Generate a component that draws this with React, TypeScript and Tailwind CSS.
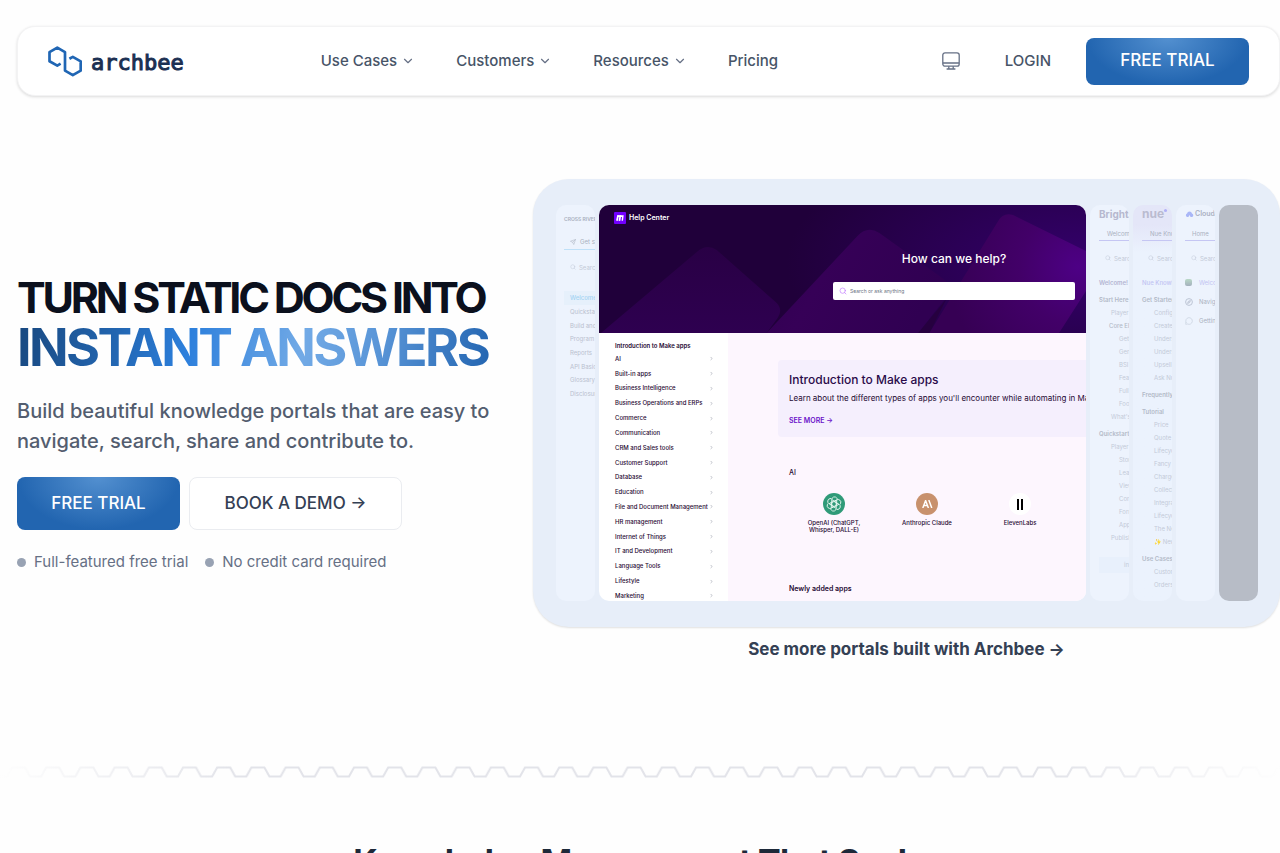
import { ChevronDown, ChevronRight, MessageCircle, Search, Send } from 'lucide-react';

const navItems = [
  { label: 'Use Cases', menu: true },
  { label: 'Customers', menu: true },
  { label: 'Resources', menu: true },
  { label: 'Pricing', menu: false },
];

const makeTopics = [
  'AI',
  'Built-in apps',
  'Business Intelligence',
  'Business Operations and ERPs',
  'Commerce',
  'Communication',
  'CRM and Sales tools',
  'Customer Support',
  'Database',
  'Education',
  'File and Document Management',
  'HR management',
  'Internet of Things',
  'IT and Development',
  'Language Tools',
  'Lifestyle',
  'Marketing',
];

const crossRiverLinks = ['Quickstart', 'Build and test', 'Program', 'Reports', 'API Basics', 'Glossary', 'Disclosures'];

type Entry = { text: string; level: number };

const brightEntries: Entry[] = [
  { text: 'Start Here', level: 0 },
  { text: 'Player', level: 2 },
  { text: 'Core Elements', level: 1 },
  { text: 'Getting', level: 3 },
  { text: 'General', level: 3 },
  { text: 'BSI', level: 3 },
  { text: 'Features', level: 3 },
  { text: 'Full', level: 3 },
  { text: 'Footer', level: 3 },
  { text: "What's new", level: 2 },
  { text: 'Quickstart', level: 0 },
  { text: 'Player', level: 2 },
  { text: 'Stories', level: 3 },
  { text: 'Learn', level: 3 },
  { text: 'Views', level: 3 },
  { text: 'Core', level: 3 },
  { text: 'Forms', level: 3 },
  { text: 'Apps', level: 3 },
  { text: 'Publish', level: 2 },
];

const nueEntries: Entry[] = [
  { text: 'Get Started', level: 0 },
  { text: 'Config', level: 2 },
  { text: 'Create', level: 2 },
  { text: 'Understand', level: 2 },
  { text: 'Understand', level: 2 },
  { text: 'Upsell', level: 2 },
  { text: 'Ask Nue', level: 2 },
  { text: 'Frequently', level: 0 },
  { text: 'Tutorial', level: 0 },
  { text: 'Price', level: 2 },
  { text: 'Quote', level: 2 },
  { text: 'Lifecycle', level: 2 },
  { text: 'Fancy', level: 2 },
  { text: 'Charge', level: 2 },
  { text: 'Collect', level: 2 },
  { text: 'Integrate', level: 2 },
  { text: 'Lifecycle', level: 2 },
  { text: 'The New', level: 2 },
  { text: '✨ New', level: 2 },
  { text: 'Use Cases', level: 0 },
  { text: 'Custom', level: 2 },
  { text: 'Orders', level: 2 },
];

const levelClass = [
  'mt-1 font-semibold text-[#b3bac8]',
  'pl-[10px] font-medium text-[#b3bac8]',
  'pl-[12px] text-[#c3cad8]',
  'pl-[20px] text-[#c3cad8]',
];

function Logo() {
  return (
    <a href="#" className="flex items-center gap-[9px]">
      <svg width="34" height="31" viewBox="0 0 34 31" fill="none" stroke="#2066b4" strokeWidth="2.7" strokeLinejoin="round">
        <path d="M12.6 17.7 9.3 19.6 1.5 15.2V6.2L9.3 1.6 17 6.2v18.4l7.8 4.5 7.9-4.5v-9.2l-7.9-4.5-3.4 1.9" />
      </svg>
      <span className="pt-1 font-['DejaVu_Sans_Mono',monospace] text-[22px] leading-8 text-[#1b2f52] [-webkit-text-stroke:1px_#1b2f52]">
        archbee
      </span>
    </a>
  );
}

function MonitorIcon() {
  return (
    <svg width="18" height="18" viewBox="0 0 18 18" fill="none" stroke="#667085" strokeWidth="1.3">
      <rect x="0.8" y="0.8" width="16.4" height="13.4" rx="2.2" />
      <path d="M1 11h16M6.8 14.2v2.6M11.2 14.2v2.6M4.6 17h8.8" />
    </svg>
  );
}

function Header() {
  return (
    <header className="flex h-[70px] items-center rounded-[18px] border border-[#f3f3f4] bg-white px-[30px] shadow-[0_1px_3px_rgba(0,0,0,0.14)]">
      <Logo />
      <nav className="ml-[137px] flex items-center gap-[41px] text-[15px] font-medium text-[#475467]">
        {navItems.map((item) => (
          <a key={item.label} href="#" className="flex items-center gap-1">
            {item.label}
            {item.menu && <ChevronDown className="size-[14px] text-[#667085]" strokeWidth={2} />}
          </a>
        ))}
      </nav>
      <div className="ml-auto flex items-center text-[#475467]">
        <button type="button" aria-label="Display mode" className="mr-[45px]">
          <MonitorIcon />
        </button>
        <a href="#" className="mr-[35px] text-[15px] font-medium">
          LOGIN
        </a>
        <a
          href="#"
          className="flex h-[47px] w-[163px] items-center justify-center rounded-lg bg-[#2265b0] bg-[radial-gradient(ellipse_at_top,#5390d0_0%,#2265b0_70%)] text-[17px] font-medium text-white"
        >
          FREE TRIAL
        </a>
      </div>
    </header>
  );
}

function Pitch() {
  return (
    <div className="w-[516px] shrink-0 pt-1">
      <h1 className="font-bold whitespace-nowrap">
        <span className="block text-[43px] leading-[50px] tracking-[-0.075em] text-[#0b101d]">TURN STATIC DOCS INTO</span>
        <span className="inline-block bg-[linear-gradient(100deg,#18487f_0%,#2264ae_20%,#2c7fdc_36%,#72aae6_60%,#5a96d8_75%,#2264b0_100%)] bg-clip-text pr-1 text-[52px] leading-[52px] tracking-tighter text-transparent">
          INSTANT ANSWERS
        </span>
      </h1>
      <p className="mt-[22px] text-xl leading-[30px] font-medium text-[#535d6f]">
        Build beautiful knowledge portals that are easy to
        <br />
        navigate, search, share and contribute to.
      </p>
      <div className="mt-[21px] flex gap-[9px]">
        <a
          href="#"
          className="flex h-[53px] w-[163px] items-center justify-center rounded-lg bg-[#2265b0] bg-[radial-gradient(ellipse_at_top,#5390d0_0%,#2265b0_70%)] text-[17px] font-medium text-white"
        >
          FREE TRIAL
        </a>
        <a
          href="#"
          className="flex h-[53px] w-[213px] items-center justify-center rounded-lg border border-[#eaecf0] bg-white text-[17px] font-medium text-[#344054]"
        >
          BOOK A DEMO →
        </a>
      </div>
      <ul className="mt-[21px] flex gap-[17px] text-[15px] leading-[22px] text-[#667085]">
        <li className="flex items-center gap-2">
          <span className="size-[9px] rounded-full bg-[#98a2b3]" />
          Full-featured free trial
        </li>
        <li className="flex items-center gap-2">
          <span className="size-[9px] rounded-full bg-[#98a2b3]" />
          No credit card required
        </li>
      </ul>
    </div>
  );
}

function SearchStub() {
  return (
    <div className="mt-[9px] flex h-4 items-center gap-[3px] pl-[6px] text-[6px] text-[#c3cad8]">
      <Search className="size-[6px] shrink-0" />
      Search
    </div>
  );
}

function EntryList({ entries }: { entries: Entry[] }) {
  return (
    <ul className="text-[6px] leading-[13px]">
      {entries.map((entry, index) => (
        <li key={index} className={levelClass[entry.level]}>
          {entry.text}
        </li>
      ))}
    </ul>
  );
}

function CrossRiverPanel() {
  return (
    <div className="w-[39px] shrink-0 overflow-hidden rounded-[10px] bg-[#edf3fd] pt-2 pl-2 whitespace-nowrap">
      <div className="text-[5px] leading-3 font-semibold text-[#a9b0be]">CROSS RIVER</div>
      <div className="mt-[9px] flex h-4 items-center gap-1 border-b border-[#bfe0f8] pl-[6px] text-[6px] text-[#a9b0be]">
        <Send className="size-[6px] shrink-0" />
        Get started
      </div>
      <SearchStub />
      <div className="mt-4 bg-[#e6f0fb] pl-[6px] text-[6px] leading-[14px] font-medium text-[#a3d3f3]">Welcome</div>
      <ul className="mt-px flex h-[94px] flex-col justify-between pl-[6px] text-[6px] leading-3 text-[#b9c0ce]">
        {crossRiverLinks.map((link) => (
          <li key={link}>{link}</li>
        ))}
      </ul>
    </div>
  );
}

function BrightPanel() {
  return (
    <div className="w-[39px] shrink-0 overflow-hidden rounded-[10px] bg-[#edf3fd] pl-[9px] whitespace-nowrap">
      <div className="text-[10px] leading-[18px] font-bold text-[#b6b8cf]">Brightspot</div>
      <div className="mt-1 h-[14px] border-b border-[#c5c6f3] pl-2 text-[6px] leading-[14px] text-[#a9b0be]">Welcome</div>
      <SearchStub />
      <div className="mt-[10px] text-[6px] leading-[13px] font-semibold text-[#b3b5d2]">Welcome!</div>
      <EntryList entries={brightEntries} />
      <div className="mt-[13px] bg-[#e8f0fc] pl-[25px] text-[6px] leading-4 text-[#c3cad8]">in</div>
    </div>
  );
}

function NuePanel() {
  return (
    <div className="w-[39px] shrink-0 overflow-hidden rounded-[10px] bg-linear-to-b from-[#e4e6f8] from-5% to-[#ebf2fd] to-12% pl-[9px] whitespace-nowrap">
      <div className="flex text-xs leading-[18px] font-bold text-[#babbd0]">
        nue
        <span className="mt-1 size-[3px] rounded-full bg-[#b0b0f6]" />
      </div>
      <div className="mt-1 h-[14px] border-b border-[#c5c6f3] pl-2 text-[6px] leading-[14px] text-[#a9b0be]">
        Nue Knowledge
      </div>
      <SearchStub />
      <div className="mt-[10px] text-[6px] leading-[13px] font-medium text-[#c1c3f2]">Nue Knowledge</div>
      <EntryList entries={nueEntries} />
    </div>
  );
}

function CloudPanel() {
  return (
    <div className="w-[39px] shrink-0 overflow-hidden rounded-[10px] bg-[#edf3fd] pl-[9px] whitespace-nowrap">
      <div className="flex items-center gap-px text-[7px] leading-[18px] font-semibold text-[#aab0c2]">
        <svg width="9" height="6" viewBox="0 0 9 6" className="shrink-0">
          <path d="M2 6a2 2 0 0 1 0-3.6A2.6 2.6 0 0 1 7 2.4 1.9 1.9 0 0 1 7 6H5.6L4.5 4 3.4 6z" fill="#a9b6f7" />
        </svg>
        Cloudline
      </div>
      <div className="mt-1 h-[14px] border-b border-[#c5c6f3] pl-[7px] text-[6px] leading-[14px] text-[#a9b0be]">Home</div>
      <SearchStub />
      <ul className="mt-[7px] text-[6px] leading-[19px] text-[#a9b0be]">
        <li className="flex items-center gap-[7px] text-[#c1c3f2]">
          <span className="size-[7px] shrink-0 rounded-xs bg-linear-to-b from-[#b9d8c6] to-[#a4b0bd]" />
          Welcome
        </li>
        <li className="flex items-center gap-[6px]">
          <svg width="8" height="8" viewBox="0 0 8 8" fill="none" stroke="#bcc4d4" className="shrink-0">
            <circle cx="4" cy="4" r="3.4" />
            <path d="m2.6 5.4.8-2 2-.8-.8 2z" />
          </svg>
          Navigate
        </li>
        <li className="flex items-center gap-[6px]">
          <MessageCircle className="size-2 shrink-0 text-[#c6cedd]" />
          Getting
        </li>
      </ul>
    </div>
  );
}

function MakeBackdrop() {
  return (
    <svg className="absolute inset-0 size-full" viewBox="0 0 488 128" preserveAspectRatio="none">
      <defs>
        <linearGradient id="peakLeft" x1="0" y1="0" x2="0" y2="1">
          <stop offset="0" stopColor="#290045" />
          <stop offset="1" stopColor="#2e0050" />
        </linearGradient>
        <linearGradient id="peakMid" x1="0" y1="0" x2="1" y2="0.3">
          <stop offset="0" stopColor="#2f0050" />
          <stop offset="0.4" stopColor="#360057" />
          <stop offset="1" stopColor="#300052" />
        </linearGradient>
        <radialGradient id="peakRight" gradientUnits="userSpaceOnUse" cx="480" cy="62" r="130">
          <stop offset="0" stopColor="#4d0085" />
          <stop offset="0.45" stopColor="#420068" />
          <stop offset="1" stopColor="#360054" />
        </radialGradient>
        <radialGradient id="glow" gradientUnits="userSpaceOnUse" cx="488" cy="58" r="300" gradientTransform="translate(0 32) scale(1 0.45)">
          <stop offset="0" stopColor="#34006c" />
          <stop offset="1" stopColor="#20003a" />
        </radialGradient>
      </defs>
      <rect width="488" height="128" fill="url(#glow)" />
      <path d="M2 128 98 47Q108 38 118 45L177 97Q185 104 179 113L168 128Z" fill="url(#peakLeft)" />
      <path d="M168 128 259 31Q269 20 281 28L344 73Q356 82 348 92L320 128Z" fill="url(#peakMid)" />
      <path d="M331 128 400 16Q405 7 415 10L488 46V86L461 128Z" fill="url(#peakRight)" />
      <path d="M348 94 331 128H320Z" fill="#26003f" />
    </svg>
  );
}

function MakePanel() {
  return (
    <div className="min-w-0 flex-1 overflow-hidden rounded-[10px] bg-white text-[#1f0a33]">
      <div className="relative h-32 overflow-hidden">
        <MakeBackdrop />
        <div className="relative w-[710px] pt-[7px]">
          <div className="flex items-center gap-[3px] pl-[15px] text-[7px] font-semibold text-white">
            <svg width="12" height="12" viewBox="0 0 12 12">
              <rect width="12" height="12" rx="1" fill="#7200ff" />
              <path d="M4.1 3.2 2.9 8.8M6.5 3.2 5.4 8.8" stroke="#fff" strokeWidth="1.7" />
              <path d="M3.6 3.2H9.7L9 8.8H7.6L8 5H3.6Z" fill="#fff" />
            </svg>
            Help Center
          </div>
          <div className="mt-[26px] text-center text-xs leading-[18px] font-medium text-white">How can we help?</div>
          <label className="mx-auto mt-[14px] flex h-[18px] w-[242px] items-center gap-[3px] rounded-xs bg-white pl-[6px]">
            <Search className="size-2 text-purple-400" strokeWidth={2} />
            <input
              type="text"
              aria-label="Search or ask anything"
              placeholder="Search or ask anything"
              className="flex-1 text-[5px] leading-3 outline-none placeholder:text-gray-500"
            />
          </label>
        </div>
      </div>
      <div className="flex h-[268px]">
        <aside className="flex w-[129px] shrink-0 flex-col justify-between overflow-hidden pt-2 pr-[14px] pl-4 text-[6px] leading-[10px] font-medium whitespace-nowrap">
          <div className="-mb-[2px] font-semibold">Introduction to Make apps</div>
          {makeTopics.map((topic) => (
            <a key={topic} href="#" className="flex items-center justify-between">
              {topic}
              <ChevronRight className="size-[5px] shrink-0 text-gray-500" />
            </a>
          ))}
        </aside>
        <div className="flex-1 overflow-hidden bg-[#fdf6fe] pt-[27px] pl-[50px]">
          <div className="h-[77px] w-[498px] rounded-sm bg-[#f5effd] pt-3 pl-[11px] whitespace-nowrap">
            <h2 className="text-xs leading-4 font-medium text-[#2a0a4a]">Introduction to Make apps</h2>
            <p className="mt-1 text-[8px] leading-3">
              Learn about the different types of apps you'll encounter while automating in Make
            </p>
            <a href="#" className="mt-[11px] block text-[7px] leading-3 font-semibold text-[#6b12c9]">
              SEE MORE →
            </a>
          </div>
          <div className="pl-[11px] text-[7px]">
            <h3 className="mt-[30px] leading-3 font-medium">AI</h3>
            <div className="mt-[14px] flex text-center text-[6px] leading-[7px] font-medium">
              <div className="flex w-[90px] shrink-0 flex-col items-center">
                <span className="flex size-[22px] items-center justify-center rounded-full bg-[#2f9a78]">
                  <svg width="16" height="16" viewBox="0 0 24 24" fill="none" stroke="#e9f8f2" strokeWidth="1.3">
                    {[0, 60, 120, 180, 240, 300].map((angle) => (
                      <path key={angle} transform={`rotate(${angle} 12 12)`} d="M12 8.2 8.6 10.2V5.4a4.2 4.2 0 0 1 7.4-2.6l1.1 1.6M8.6 5.4l6.8 3.9" />
                    ))}
                  </svg>
                </span>
                <span className="mt-1">
                  OpenAI (ChatGPT,
                  <br />
                  Whisper, DALL-E)
                </span>
              </div>
              <div className="flex w-24 shrink-0 flex-col items-center">
                <span className="flex size-[22px] items-center justify-center rounded-full bg-[#c8916d]">
                  <svg width="11" height="8" viewBox="0 0 11 8" fill="none" stroke="#fff" strokeWidth="1.5">
                    <path d="M.8 8 3.6.6 6.4 8M1.8 5.6h3.6M6.8 0l3 8" />
                  </svg>
                </span>
                <span className="mt-1">Anthropic Claude</span>
              </div>
              <div className="flex w-[90px] shrink-0 flex-col items-center">
                <span className="flex size-[22px] items-center justify-center gap-[2px] rounded-full bg-white">
                  <span className="h-[11px] w-[2px] bg-black" />
                  <span className="h-[11px] w-[2px] bg-black" />
                </span>
                <span className="mt-1">ElevenLabs</span>
              </div>
            </div>
            <h3 className="mt-[50px] leading-3 font-semibold">Newly added apps</h3>
          </div>
        </div>
      </div>
    </div>
  );
}

function PortalShowcase() {
  return (
    <div className="min-w-0 flex-1">
      <div className="flex gap-1 rounded-[36px] bg-[#e7eef9] py-[26px] pr-[22px] pl-[23px] shadow-[0_1px_2px_rgba(0,0,0,0.12)]">
        <CrossRiverPanel />
        <MakePanel />
        <BrightPanel />
        <NuePanel />
        <CloudPanel />
        <div className="w-[39px] shrink-0 rounded-[10px] bg-[#b7bcc6]" />
      </div>
      <a href="#" className="mt-[9px] block text-center text-[17px] leading-[26px] font-bold text-[#344054]">
        See more portals built with Archbee →
      </a>
    </div>
  );
}

function Divider() {
  return (
    <svg
      className="block h-4 w-full [mask-image:linear-gradient(90deg,transparent_0%,black_18%,black_82%,transparent_100%)]"
      aria-hidden="true"
    >
      <defs>
        <pattern id="comb" width="34.2" height="16" patternUnits="userSpaceOnUse" x="6">
          <path d="M-5 12.5H1L6 3.5H19L24 12.5H35.2" fill="none" stroke="#e2e3e9" strokeWidth="2" />
        </pattern>
      </defs>
      <rect width="100%" height="16" fill="url(#comb)" />
    </svg>
  );
}

export default function App() {
  return (
    <div className="min-h-screen overflow-hidden bg-[#fefefe] font-[Inter,sans-serif]">
      <div className="pt-[26px] pl-[17px]">
        <Header />
        <main className="mt-[83px] flex items-center">
          <Pitch />
          <PortalShowcase />
        </main>
      </div>
      <div className="mt-[102px]">
        <Divider />
      </div>
      <section className="pt-[58px] pb-16 pl-[17px]">
        <h2 className="text-center text-[34px] leading-[48px] font-bold tracking-tight text-[#1d2939]">
          Knowledge Management That Scales
        </h2>
      </section>
    </div>
  );
}
